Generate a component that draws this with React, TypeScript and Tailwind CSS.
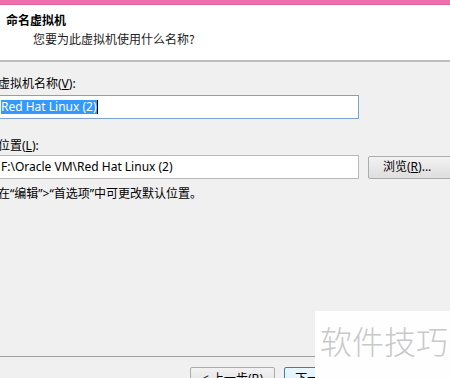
import React from "react";

export default function App() {
  return (
    <div className="w-[450px] h-[378px] relative overflow-hidden bg-[#f0f0f0] flex flex-col text-[12px] text-black font-['Segoe_UI','Noto_Sans','Noto_Sans_CJK_SC',sans-serif]">
      <div className="h-[4px] bg-[#f06eaa]" />
      <div className="h-px bg-[#d9679d]" />
      <div className="h-[57px] bg-white border-b-2 border-[#bdbdbd] pt-[7px]">
        <div className="pl-[6px] font-bold leading-[16px] font-['Noto_Sans_CJK_SC',sans-serif]">命名虚拟机</div>
        <div className="pl-[33px] mt-[3px] leading-[16px] text-[#222] font-['Noto_Sans_CJK_SC',sans-serif]">
          您要为此虚拟机使用什么名称?
        </div>
      </div>

      <div className="flex-1 flex flex-col ml-[-2px]">
        <div className="mt-[14px] leading-[16px]">
          虚拟机名称(<span className="underline">V</span>):
        </div>
        <div className="mt-[3px] ml-[-2px] w-[363px] h-[24px] shrink-0 bg-white border border-[#7da2ce] flex items-center pl-[4px]">
          <span className="bg-[#3399ff] text-white leading-[14px] h-[14px]">Red Hat Linux (2)</span>
          <span className="w-px h-[14px] bg-black" />
        </div>
        <div className="mt-[19px] leading-[16px]">
          位置(<span className="underline">L</span>):
        </div>
        <div className="mt-px flex items-center">
          <div className="ml-[-2px] w-[363px] h-[24px] shrink-0 bg-white border border-[#b9b9b9] flex items-center pl-[4px]">
            F:\Oracle VM\Red Hat Linux (2)
          </div>
          <div className="ml-[9px] w-[92px] h-[23px] shrink-0 border border-[#acacac] rounded-[2px] bg-gradient-to-b from-[#f2f2f2] to-[#dedede] flex items-center pl-[14px]">
            浏览(<span className="underline">R</span>)...
          </div>
        </div>
        <div className="mt-[7px] leading-[16px]">
          在“编辑”&gt;“首选项”中可更改默认位置。
        </div>
      </div>

      <div className="h-[22px] border-t border-[#a0a0a0] pt-[10px] flex pl-[190px] gap-[9px]">
        <div className="w-[85px] h-[23px] shrink-0 border border-[#acacac] rounded-[2px] bg-gradient-to-b from-[#f2f2f2] to-[#dedede] flex items-center justify-center">
          &lt; 上一步(<span className="underline">B</span>)
        </div>
        <div className="w-[85px] h-[23px] shrink-0 border border-[#3c7fb1] rounded-[2px] bg-gradient-to-b from-[#eaf6fd] to-[#d9f0fc] flex items-center justify-center">
          下一步(<span className="underline">N</span>) &gt;
        </div>
      </div>

      <div className="absolute left-[315px] top-[311px] right-0 bottom-0 bg-[#fefefe] pl-[5px] pt-[11px]">
        <div className="text-[32px] leading-[36px] text-[#c9c9c9] font-['Noto_Sans_CJK_SC',sans-serif] font-light">
          软件技巧
        </div>
      </div>
    </div>
  );
}
